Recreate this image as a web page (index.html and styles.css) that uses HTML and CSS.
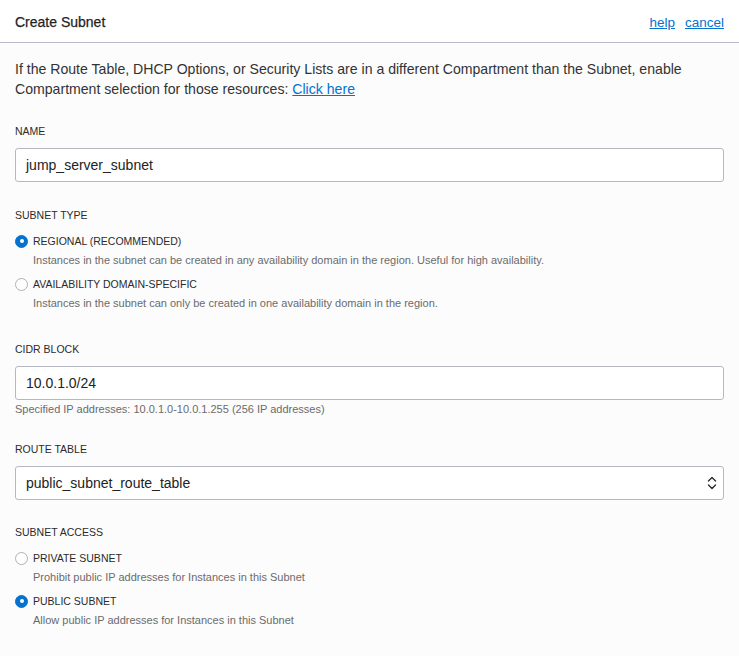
FILE: index.html
```html
<!DOCTYPE html>
<html lang="en">
<head>
<meta charset="utf-8">
<title>Create Subnet</title>
<link rel="stylesheet" href="styles.css">
</head>
<body>
<div class="panel">
  <header class="header">
    <h1 class="title">Create Subnet</h1>
    <nav class="header-links">
      <a href="#" class="link light">help</a>
      <a href="#" class="link light">cancel</a>
    </nav>
  </header>
  <main class="content">
    <p class="intro">If the Route Table, DHCP Options, or Security Lists are in a different Compartment than the Subnet, enable Compartment selection for those resources: <a href="#" class="link">Click here</a></p>

    <section class="field field-name">
      <div class="field-label">NAME</div>
      <div class="input">jump_server_subnet</div>
    </section>

    <section class="field field-type">
      <div class="field-label">SUBNET TYPE</div>
      <div class="option">
        <span class="radio checked"></span>
        <span class="option-label">REGIONAL (RECOMMENDED)</span>
      </div>
      <div class="option-help">Instances in the subnet can be created in any availability domain in the region. Useful for high availability.</div>
      <div class="option">
        <span class="radio"></span>
        <span class="option-label">AVAILABILITY DOMAIN-SPECIFIC</span>
      </div>
      <div class="option-help">Instances in the subnet can only be created in one availability domain in the region.</div>
    </section>

    <section class="field field-cidr">
      <div class="field-label">CIDR BLOCK</div>
      <div class="input">10.0.1.0/24</div>
      <div class="field-help">Specified IP addresses: 10.0.1.0-10.0.1.255 (256 IP addresses)</div>
    </section>

    <section class="field field-route">
      <div class="field-label">ROUTE TABLE</div>
      <div class="input select">
        <span>public_subnet_route_table</span>
        <svg class="chevrons" width="10" height="14" viewBox="0 0 10 14" aria-hidden="true">
          <path d="M1.5 5 L5 1.5 L8.5 5" fill="none" stroke="#2b2b2b" stroke-width="1.4" stroke-linecap="round" stroke-linejoin="round"/>
          <path d="M1.5 9 L5 12.5 L8.5 9" fill="none" stroke="#2b2b2b" stroke-width="1.4" stroke-linecap="round" stroke-linejoin="round"/>
        </svg>
      </div>
    </section>

    <section class="field field-access">
      <div class="field-label">SUBNET ACCESS</div>
      <div class="option">
        <span class="radio"></span>
        <span class="option-label">PRIVATE SUBNET</span>
      </div>
      <div class="option-help">Prohibit public IP addresses for Instances in this Subnet</div>
      <div class="option">
        <span class="radio checked"></span>
        <span class="option-label">PUBLIC SUBNET</span>
      </div>
      <div class="option-help">Allow public IP addresses for Instances in this Subnet</div>
    </section>
  </main>
</div>
</body>
</html>
```

FILE: styles.css
```css
html, body {
  margin: 0;
  padding: 0;
}
body {
  background: #fcfcfd;
  font-family: "Liberation Sans", Arial, Helvetica, sans-serif;
  color: #2e2e2e;
  width: 739px;
  height: 656px;
  overflow: hidden;
}
.panel {
  display: flex;
  flex-direction: column;
}
.header {
  height: 42px;
  background: #ffffff;
  border-bottom: 1px solid #b9bcc8;
  display: flex;
  align-items: center;
  justify-content: space-between;
  padding: 0 15px;
}
.title {
  margin: 2px 0 0;
  font-size: 14px;
  font-weight: normal;
  color: #1f1f1f;
  -webkit-text-stroke: 0.25px #1f1f1f;
}
.header-links {
  display: flex;
  gap: 10px;
  margin-top: 2px;
}
.link {
  color: #0572ce;
  text-decoration: underline;
}
.link.light {
  font-size: 13.5px;
}
.content {
  padding: 0 15px;
}
.intro {
  margin: 16px 0 0;
  font-size: 14.1px;
  line-height: 20px;
  color: #333333;
}
.field-label {
  font-size: 10.5px;
  line-height: 14px;
  color: #2b2b2b;
  margin-bottom: 10px;
}
.field-name { margin-top: 25px; }
.field-type { margin-top: 26px; }
.field-cidr { margin-top: 32px; }
.field-route { margin-top: 26px; }
.field-access { margin-top: 25px; }

.input {
  height: 32px;
  border: 1px solid #b5b8c2;
  border-radius: 3px;
  background: #ffffff;
  display: flex;
  align-items: center;
  padding: 0 10px;
  font-size: 14px;
  color: #222222;
}
.select {
  justify-content: space-between;
  padding-right: 6px;
}
.chevrons {
  display: block;
}
.field-help {
  font-size: 11px;
  line-height: 14px;
  color: #6b6b6b;
  margin-top: 2px;
}
.option {
  display: flex;
  align-items: center;
  gap: 5px;
  height: 18px;
  margin-top: 9px;
}
.option + .option-help + .option {
  margin-top: 8px;
}
.radio {
  width: 13px;
  height: 13px;
  box-sizing: border-box;
  border-radius: 50%;
  border: 1px solid #aeb1b8;
  background: #ffffff;
  flex: none;
  display: flex;
  align-items: center;
  justify-content: center;
}
.radio.checked {
  background: #0572ce;
  border-color: #0572ce;
}
.radio.checked::after {
  content: "";
  width: 4px;
  height: 4px;
  border-radius: 50%;
  background: #ffffff;
}
.option-label {
  font-size: 10.5px;
  line-height: 14px;
  color: #2b2b2b;
}
.option-help {
  font-size: 11px;
  line-height: 14px;
  color: #6b6b6b;
  margin-top: 3px;
  padding-left: 18px;
}
```
